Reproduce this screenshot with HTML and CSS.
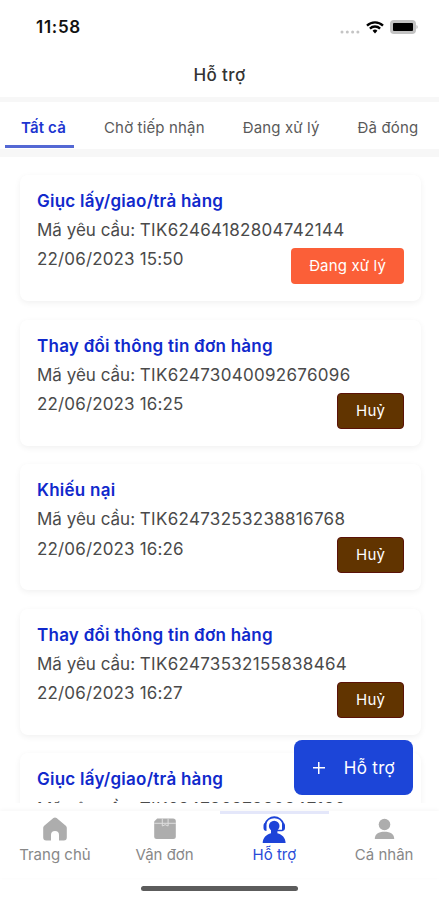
FILE: index.html
```html
<!DOCTYPE html>
<html lang="vi">
<head>
    <meta charset="UTF-8">
    <meta name="viewport" content="width=device-width, initial-scale=1.0">
    <title>Hỗ trợ</title>
    <link rel="stylesheet" href="styles.css">
</head>
<body>
    <div class="status-bar">
        <span class="time">11:58</span>
        <div class="status-icons">
            <svg class="signal" width="20" height="4" viewBox="0 0 20 4" fill="#c4c4c4">
                <circle cx="2" cy="2" r="1.5"/>
                <circle cx="7.3" cy="2" r="1.5"/>
                <circle cx="12.6" cy="2" r="1.5"/>
                <circle cx="17.9" cy="2" r="1.5"/>
            </svg>
            <svg class="wifi" width="18" height="13" viewBox="0 0 18 13">
                <path d="M1 4.6a11.4 11.4 0 0 1 16 0M3.9 7.6a7.3 7.3 0 0 1 10.2 0" fill="none" stroke="#000" stroke-width="2.3"/>
                <path d="M9 8.6a3.5 3.5 0 0 1 2.4 1.1L9 12.6 6.6 9.7A3.5 3.5 0 0 1 9 8.6z"/>
            </svg>
            <svg class="battery" width="28" height="14" viewBox="0 0 28 14">
                <rect width="26" height="14" rx="4" fill="#c2c2c2"/>
                <path d="M26.5 5v4a2.3 2.3 0 0 0 0-4z" fill="#b5b5b5"/>
                <rect x="3" y="3" width="20" height="8" rx="1" fill="#000"/>
            </svg>
        </div>
    </div>

    <header>
        <h1>Hỗ trợ</h1>
    </header>

    <nav class="tabs">
        <a class="tab active">Tất cả</a>
        <a class="tab">Chờ tiếp nhận</a>
        <a class="tab">Đang xử lý</a>
        <a class="tab">Đã đóng</a>
    </nav>

    <main class="tickets">
        <div class="ticket">
            <h2>Giục lấy/giao/trả hàng</h2>
            <p>Mã yêu cầu: <span class="code">TIK62464182804742144</span></p>
            <p>22/06/2023 15:50</p>
            <span class="badge processing">Đang xử lý</span>
        </div>
        <div class="ticket">
            <h2>Thay đổi thông tin đơn hàng</h2>
            <p>Mã yêu cầu: <span class="code">TIK62473040092676096</span></p>
            <p>22/06/2023 16:25</p>
            <span class="badge cancelled">Huỷ</span>
        </div>
        <div class="ticket">
            <h2>Khiếu nại</h2>
            <p>Mã yêu cầu: <span class="code">TIK62473253238816768</span></p>
            <p>22/06/2023 16:26</p>
            <span class="badge cancelled">Huỷ</span>
        </div>
        <div class="ticket">
            <h2>Thay đổi thông tin đơn hàng</h2>
            <p>Mã yêu cầu: <span class="code">TIK62473532155838464</span></p>
            <p>22/06/2023 16:27</p>
            <span class="badge cancelled">Huỷ</span>
        </div>
        <div class="ticket">
            <h2>Giục lấy/giao/trả hàng</h2>
            <p>Mã yêu cầu: <span class="code">TIK62473627230347136</span></p>
        </div>
        <button class="fab"><span class="plus"></span>Hỗ trợ</button>
    </main>

    <nav class="bottom-nav">
        <a class="nav-item">
            <svg width="26" height="24" viewBox="0 0 26 24" fill="#adadad">
                <path d="M11.4 1.1a2.5 2.5 0 0 1 3.2 0l9.2 7.6c.6.5 1 1.3 1 2.1V20.500a3 3 0 0 1-3 3H17v-5.500a4 4 0 0 0-8 0v5.500H4.200a3 3 0 0 1-3-3V10.800c0-.8.4-1.6 1-2.1z"/>
            </svg>
            <span>Trang chủ</span>
        </a>
        <a class="nav-item">
            <svg width="26" height="24" viewBox="0 0 26 24">
                <path d="M5.200 1.500h15.800a2.800 2.800 0 0 1 2.800 2.800v15.200a2.500 2.500 0 0 1-2.500 2.500H4.700a2.500 2.500 0 0 1-2.500-2.500V4.500z" fill="#adadad"/>
                <path d="M2.200 6.300H24M10.300 1.500v7.500l2.900-1.300 2.900 1.300V1.500" fill="none" stroke="#dedede" stroke-width="1"/>
            </svg>
            <span>Vận đơn</span>
        </a>
        <a class="nav-item active">
            <svg width="26" height="28" viewBox="0 0 26 28" fill="#1d43d8">
                <path d="M4.300 8A9.300 9 0 0 1 22.300 8" fill="none" stroke="#1d43d8" stroke-width="1.8"/>
                <path d="M5.500 6.500v8.500c-1.800 0-3-1.200-3-3V9.500c0-1.800 1.200-3 3-3zM21 6.500v8.500c1.800 0 3-1.200 3-3V9.500c0-1.800-1.200-3-3-3z"/>
                <circle cx="13.2" cy="10" r="5.3"/>
                <path d="M14 14.500h7.500" stroke="#1d43d8" stroke-width="1.5"/>
                <path d="M10 14h6.400v3.200c4.500.8 8.200 4.800 8.200 9.800H1.700c0-5 3.800-9 8.300-9.800z"/>
            </svg>
            <span>Hỗ trợ</span>
        </a>
        <a class="nav-item">
            <svg width="26" height="24" viewBox="0 0 26 24" fill="#adadad">
                <circle cx="13.5" cy="7.5" r="5.8"/>
                <path d="M3.800 22c0-5 3.700-7.200 9.700-7.200s9.700 2.200 9.700 7.200z"/>
            </svg>
            <span>Cá nhân</span>
        </a>
    </nav>
    <div class="home-indicator"></div>
</body>
</html>
```

FILE: styles.css
```css
/* Global Styles */
* {
    box-sizing: border-box;
}

body {
    display: flex;
    flex-direction: column;
    height: 900px;
    margin: 0;
    overflow: hidden;
    background-color: #fff;
    font-family: 'Inter', sans-serif;
    color: #4a4a4a;
}

h1, h2, p {
    margin: 0;
}

/* Status Bar */
.status-bar {
    display: flex;
    justify-content: space-between;
    align-items: center;
    height: 54px;
    padding: 0 21px 0 36px;
}

.time {
    font-size: 17px;
    font-weight: 600;
    letter-spacing: 0.7px;
    color: #111;
}

.status-icons {
    display: flex;
    align-items: center;
    gap: 6px;
}

.signal {
    margin-top: 9px;
}

/* Header */
header {
    height: 48px;
    border-bottom: 5px solid #f7f7f7;
    text-align: center;
}

header h1 {
    font-size: 17px;
    font-weight: 500;
    line-height: 42px;
    letter-spacing: 0.4px;
    color: #333;
}

/* Tabs */
.tabs {
    display: flex;
    height: 55px;
    padding-left: 5px;
    border-bottom: 8px solid #f7f7f7;
    white-space: nowrap;
}

.tab {
    flex: none;
    height: 46px;
    margin-right: 22px;
    padding: 0 8px;
    font-size: 15px;
    line-height: 52px;
    letter-spacing: 0.15px;
    color: #5a5a5a;
}

.tab.active {
    width: 69px;
    padding: 0 0 0 16px;
    border-bottom: 3px solid #5468d4;
    font-weight: 600;
    color: #1d35d0;
}

.tab:last-child {
    margin-right: 0;
}

/* Ticket List */
.tickets {
    position: relative;
    display: flex;
    flex-direction: column;
    gap: 18.6px;
    height: 646px;
    padding: 18px 18px 0 20px;
    overflow: hidden;
}

.ticket {
    position: relative;
    flex: none;
    height: 126px;
    padding: 12px 17px;
    border-radius: 8px;
    background-color: #fff;
    box-shadow: 0 2px 6px rgba(0, 0, 0, 0.06);
    font-size: 17px;
    line-height: 29.2px;
}

.ticket h2 {
    font-size: 17px;
    font-weight: 600;
    letter-spacing: 0.25px;
    color: #1029cc;
}

.ticket p + p {
    letter-spacing: 0.15px;
}

.code {
    letter-spacing: 0.3px;
}

.badge {
    position: absolute;
    right: 17px;
    bottom: 17px;
    height: 36px;
    padding: 0 18px;
    border-radius: 4px;
    font-size: 15px;
    line-height: 36px;
    letter-spacing: 0.15px;
    color: #fff;
}

.processing {
    background-color: #fb5f38;
}

.cancelled {
    background-color: #613400;
    border: 1px solid #5a1208;
    line-height: 34px;
}

/* Floating Button */
.fab {
    position: absolute;
    right: 26px;
    bottom: 8px;
    display: flex;
    align-items: center;
    justify-content: space-between;
    width: 119px;
    height: 55px;
    padding: 0 18px 0 19px;
    border: none;
    border-radius: 8px;
    background-color: #1c45d8;
    font-family: inherit;
    font-size: 17px;
    letter-spacing: 0.3px;
    color: #fff;
}

.plus {
    width: 12px;
    height: 12px;
    background: linear-gradient(#fff, #fff) center / 12px 1.5px no-repeat,
                linear-gradient(#fff, #fff) center / 1.5px 12px no-repeat;
}

/* Bottom Navigation */
.bottom-nav {
    display: grid;
    grid-template-columns: repeat(4, 1fr);
    height: 67px;
    margin-top: 8px;
    box-shadow: 0 -1px 4px rgba(0, 0, 0, 0.04);
}

.nav-item {
    display: flex;
    flex-direction: column;
    align-items: center;
    padding-top: 6px;
    font-size: 15px;
    line-height: 20px;
    color: #888;
}

.nav-item span {
    margin-top: 4px;
}

.nav-item.active {
    padding-top: 2px;
    border-top: 3px solid #e4e7fa;
    color: #2a4bd8;
}

.nav-item.active span {
    margin-top: 1px;
}

.home-indicator {
    width: 157px;
    height: 5px;
    margin: 8px auto 0;
    border-radius: 3px;
    background-color: #5c5c5c;
}
```
